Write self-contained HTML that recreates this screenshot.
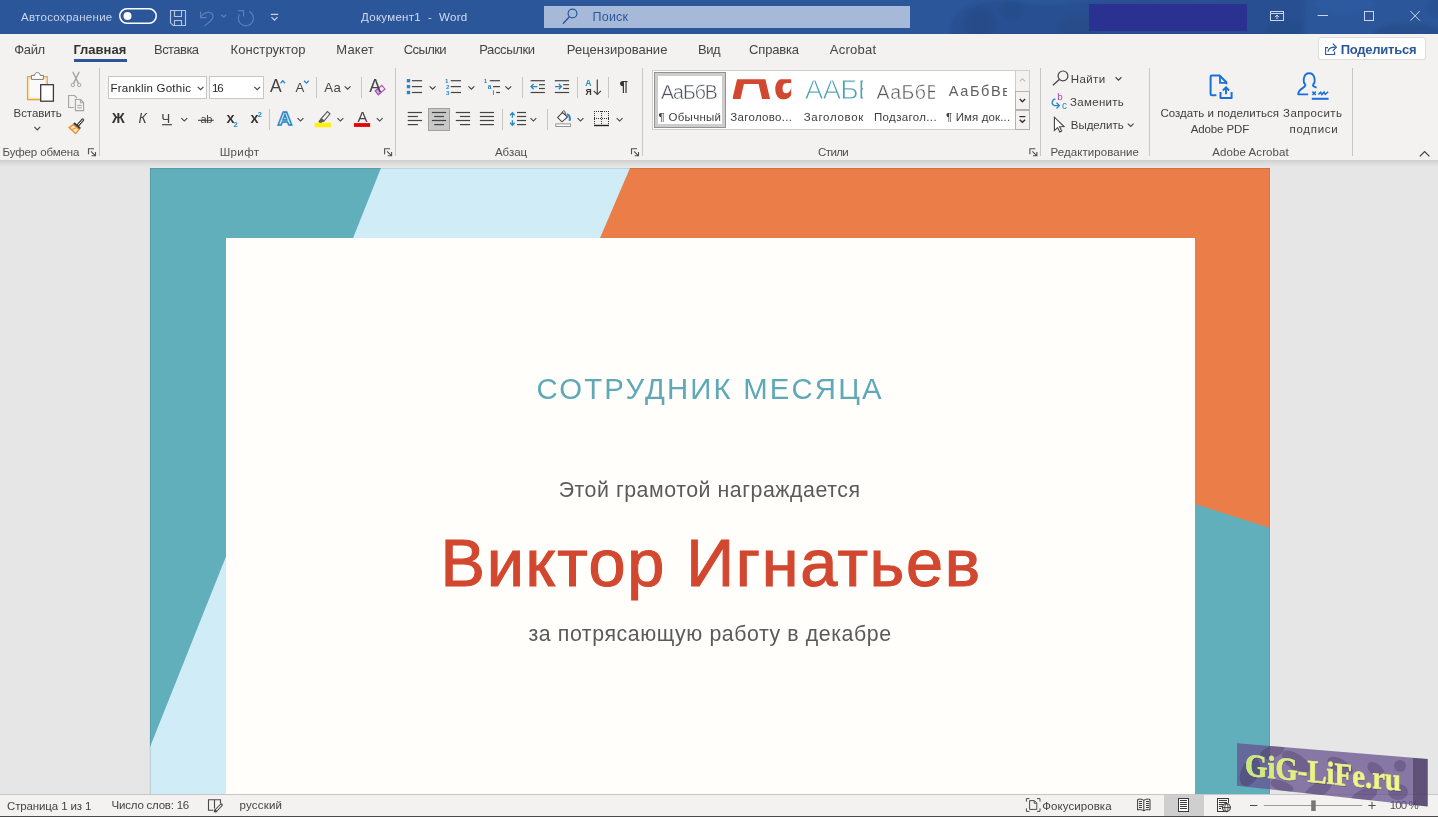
<!DOCTYPE html>
<html lang="ru">
<head>
<meta charset="utf-8">
<title>Документ1 - Word</title>
<style>
html,body{margin:0;padding:0;}
body{width:1438px;height:817px;overflow:hidden;background:#e6e6e6;font-family:"Liberation Sans",sans-serif;}
#app{position:relative;width:1438px;height:817px;overflow:hidden;background:#e6e6e6;}
#app div,#app span{box-sizing:border-box;}
.abs{position:absolute;}
.t{position:absolute;white-space:pre;line-height:1;font-family:"Liberation Sans",sans-serif;}
.t.clipR{overflow:hidden;}
.t.thin{-webkit-text-stroke:0.45px #fff;}
.t.thin2{-webkit-text-stroke:0.8px #fff;}
.t.name{-webkit-text-stroke:1.1px #d3472f;}
#titlebar{position:absolute;left:0;top:0;width:1438px;height:34px;background:#2b579a;overflow:hidden;}
#tabs{position:absolute;left:0;top:34px;width:1438px;height:30px;background:#f3f2f1;}
#ribbon{position:absolute;left:0;top:64px;width:1438px;height:96px;background:#f3f2f1;}
#rshadow{position:absolute;left:0;top:160px;width:1438px;height:7px;background:linear-gradient(#cfcfcf,#dcdcdc 45%,#e6e6e6);}
#status{position:absolute;left:0;top:794px;width:1438px;height:23px;background:#f3f2f1;border-top:1px solid #c6c6c6;border-bottom:1px solid #4a4a4a;}
.sep{position:absolute;width:1px;background:#c8c6c4;}
.box{position:absolute;background:#fff;border:1px solid #c8c6c4;}
#search{position:absolute;left:544px;top:6px;width:366px;height:22px;background:#a7b9d9;}
#userblk{position:absolute;left:1089px;top:4px;width:158px;height:27px;background:#2a3191;}
#share{position:absolute;left:1318px;top:37px;width:108px;height:23px;background:#fff;border:1px solid #e0deda;border-radius:3px;}
#tabul{position:absolute;left:74px;top:59px;width:53px;height:3px;background:#2b579a;}
#page{position:absolute;left:150px;top:168px;width:1120px;height:626px;background:#cfecf7;overflow:hidden;}
#inner{position:absolute;left:76px;top:70px;width:969px;height:560px;background:#fffefa;}
#texts{position:absolute;left:0;top:0;width:1438px;height:817px;will-change:opacity;}
#svgi{position:absolute;left:0;top:0;width:1438px;height:817px;pointer-events:none;}
</style>

</head>
<body>
<div id="app">
<!-- document area -->
<div id="page">
  <svg class="abs" style="left:0;top:0" width="1120" height="626" viewBox="150 168 1120 626">
    <polygon points="150,168 381,168 150,747" fill="#62afbc"/>
    <polygon points="1190,490 1270,490 1270,794 1190,794" fill="#62afbc"/>
    <polygon points="630,168 1270,168 1270,528 1195,504 1190,502.4 1190,238 600,238" fill="#eb7d49"/>
  </svg>
  <div id="inner"></div>
</div>
<div class="abs" style="left:150px;top:168px;width:1120px;height:626px;box-shadow:inset 1px 1px 0 rgba(0,0,0,0.10),inset -1px 0 0 rgba(0,0,0,0.08)"></div>
<div class="abs" style="left:149px;top:167px;width:1px;height:627px;background:#dedede"></div>
<div class="abs" style="left:1270px;top:167px;width:1px;height:627px;background:#ebebeb"></div>

<!-- title bar -->
<div id="titlebar">
  <svg class="abs" style="left:900px;top:0" width="538" height="34" viewBox="900 0 538 34">
    <defs><filter id="tb" x="-10%" y="-50%" width="120%" height="200%"><feGaussianBlur stdDeviation="2.2"/></filter></defs>
    <g filter="url(#tb)">
      <path d="M950 40 C948 20 960 4 985 2 C1010 -2 1030 6 1060 4 C1100 0 1140 -6 1200 -4 L1300 -6 C1312 6 1300 22 1308 40 Z" fill="#264c8a" opacity="0.62"/>
      <circle cx="980" cy="24" r="15" fill="#234781" opacity="0.45"/>
      <circle cx="1012" cy="9" r="10" fill="#234781" opacity="0.35"/>
      <ellipse cx="1080" cy="28" rx="22" ry="12" fill="#234781" opacity="0.4"/>
      <ellipse cx="1285" cy="30" rx="18" ry="10" fill="#234781" opacity="0.35"/>
      <ellipse cx="1345" cy="4" rx="30" ry="9" fill="#2d5ca3" opacity="0.6"/>
      <ellipse cx="1408" cy="34" rx="34" ry="11" fill="#254a86" opacity="0.6"/>
      <circle cx="1436" cy="6" r="10" fill="#254a86" opacity="0.4"/>
    </g>
  </svg>
  <div id="search"></div>
  <div id="userblk"></div>
</div>

<!-- tabs row -->
<div id="tabs"></div>
<div id="tabul"></div>
<div id="share"></div>

<!-- ribbon -->
<div id="ribbon"></div>
<div id="rshadow"></div>
<!-- group separators -->
<div class="sep" style="left:99px;top:68px;height:88px"></div>
<div class="sep" style="left:395px;top:68px;height:88px"></div>
<div class="sep" style="left:642px;top:68px;height:88px"></div>
<div class="sep" style="left:1040px;top:68px;height:88px"></div>
<div class="sep" style="left:1149px;top:68px;height:88px"></div>
<div class="sep" style="left:1352px;top:68px;height:88px"></div>
<!-- small separators -->
<div class="sep" style="left:316px;top:77px;height:21px"></div>
<div class="sep" style="left:361px;top:77px;height:21px"></div>
<div class="sep" style="left:269px;top:109px;height:21px"></div>
<div class="sep" style="left:522px;top:77px;height:21px"></div>
<div class="sep" style="left:577px;top:77px;height:21px"></div>
<div class="sep" style="left:608px;top:77px;height:21px"></div>
<div class="sep" style="left:502px;top:109px;height:21px"></div>
<div class="sep" style="left:547px;top:109px;height:21px"></div>
<!-- font name / size boxes -->
<div class="box" style="left:108px;top:76px;width:99px;height:23px"></div>
<div class="box" style="left:209px;top:76px;width:55px;height:23px"></div>
<!-- centered-align selected -->
<div class="abs" style="left:428px;top:108px;width:22px;height:23px;background:#c8c8c8;border:1px solid #a0a0a0"></div>
<!-- styles gallery -->
<div class="box" style="left:652px;top:70px;width:378px;height:60px;border-color:#d0cecc"></div>
<div class="abs" style="left:654px;top:72px;width:72px;height:56px;background:#cdcdcd;border:1px solid #929292"></div>
<div class="abs" style="left:658px;top:76px;width:64px;height:48px;background:#fff"></div>
<div class="abs" style="left:1015px;top:70px;width:15px;height:60px;background:#f3f2f1;border:1px solid #d0cecc"></div>
<div class="abs" style="left:1015px;top:91px;width:15px;height:19px;background:#f3f2f1;border:1px solid #b4b2b0"></div>
<div class="abs" style="left:1015px;top:110px;width:15px;height:20px;background:#f3f2f1;border:1px solid #b4b2b0"></div>

<!-- status bar -->
<div id="status"></div>
<div class="abs" style="left:1164px;top:795px;width:40px;height:21px;background:#cfcfcf"></div>

<svg id="svgi" width="1438" height="817" viewBox="0 0 1438 817" font-family="Liberation Sans, sans-serif">
<rect x="119.75" y="8.75" width="36.5" height="14.5" fill="none" stroke="#ffffff" stroke-width="1.5" rx="7.25"/>
<circle cx="127.5" cy="16" r="4" fill="#ffffff"/>
<path d="M170.5,10.5 H185.5 V25.5 H173.2 L170.5,22.8 Z" stroke="#b4c5e4" stroke-width="1.1" fill="none" />
<path d="M174.5,10.5 V16.5 H181.5 V10.5" stroke="#b4c5e4" stroke-width="1.1" fill="none" />
<path d="M174.5,25.5 V20.5 H181.5 V25.5" stroke="#b4c5e4" stroke-width="1.1" fill="none" />
<path d="M200.6,11.5 V17.6 H206.8" stroke="#5c7fb8" stroke-width="1.2" fill="none" />
<path d="M201,17.2 C204,11.5 213,10.5 213,16.5 C213,20 209.5,22 204.5,26" stroke="#5c7fb8" stroke-width="1.2" fill="none" />
<path d="M221.2,14.75 L223.7,17.25 L226.2,14.75" stroke="#5c7fb8" stroke-width="1.1" fill="none" />
<path d="M249.3,11.4 A7.6,7.6 0 1 1 239.4,14.2" stroke="#5c7fb8" stroke-width="1.2" fill="none" />
<path d="M238.2,10.7 H243.6 V16.4" stroke="#5c7fb8" stroke-width="1.2" fill="none" />
<line x1="270.8" y1="14.4" x2="278.2" y2="14.4" stroke="#c9d5ea" stroke-width="1.2" />
<path d="M271.5,17.1 L274.5,20.1 L277.5,17.1" stroke="#c9d5ea" stroke-width="1.2" fill="none" />
<circle cx="572.5" cy="13.5" r="4.4" fill="none" stroke="#2b579a" stroke-width="1.2"/>
<line x1="569.4" y1="16.8" x2="563" y2="23.8" stroke="#2b579a" stroke-width="1.3" />
<rect x="1270.5" y="11.5" width="13" height="9" fill="none" stroke="#c9d5ea" stroke-width="1" />
<line x1="1270.5" y1="13.5" x2="1283.5" y2="13.5" stroke="#c9d5ea" stroke-width="1" />
<path d="M1277,19.2 V15.4 M1274.8,17.2 L1277,15 L1279.2,17.2" stroke="#c9d5ea" stroke-width="1" fill="none" />
<line x1="1317.6" y1="15.5" x2="1328" y2="15.5" stroke="#c9d5ea" stroke-width="1" />
<rect x="1364.5" y="11.5" width="9" height="9" fill="none" stroke="#c9d5ea" stroke-width="1" />
<path d="M1410.4,11 L1419.8,20.6 M1419.8,11 L1410.4,20.6" stroke="#c9d5ea" stroke-width="1" fill="none" />
<path d="M1328,47.6 H1325.6 V54.5 H1334.6 V51.4" stroke="#2b579a" stroke-width="1.1" fill="none" />
<path d="M1328,51.8 C1328.2,48.4 1330.6,47.2 1335.6,47.2" stroke="#2b579a" stroke-width="1.2" fill="none" />
<path d="M1332.8,43.6 L1336.4,47.2 L1332.8,50.8" stroke="#2b579a" stroke-width="1.2" fill="none" />
<rect x="27.6" y="76.8" width="19.6" height="22.8" fill="#fafafa" stroke="#e8a23c" stroke-width="1.4" />
<rect x="28.9" y="78.1" width="17" height="20.2" fill="none" stroke="#fbe0aa" stroke-width="1.1" />
<path d="M31.4,79.4 V75.4 H34.6 C34.8,71.6 40,71.6 40.2,75.4 H43.4 V79.4 Z" stroke="#7a7a7a" stroke-width="1" fill="#ffffff" />
<rect x="40.7" y="84.7" width="12.7" height="16.5" fill="#ffffff" stroke="#3b3b3b" stroke-width="1.3" />
<path d="M34.4,126.95 L37.3,129.85 L40.199999999999996,126.95" stroke="#444444" stroke-width="1.15" fill="none" />
<path d="M72.8,71.8 L78.4,83.4 M79.2,71.8 L73.6,83.4" stroke="#a3a3a3" stroke-width="1.4" fill="none" />
<circle cx="72.8" cy="85" r="1.7" fill="none" stroke="#a3a3a3" stroke-width="1"/>
<circle cx="79.2" cy="85" r="1.7" fill="none" stroke="#a3a3a3" stroke-width="1"/>
<path d="M74,107.5 H68.6 V95.5 H74.5 L77,98" stroke="#a3a3a3" stroke-width="1.1" fill="none" />
<path d="M75.4,99.5 H80.5 L83.6,102.6 V110.6 H75.4 Z" stroke="#a3a3a3" stroke-width="1.1" fill="none" />
<path d="M80.4,99.6 V102.8 H83.6" stroke="#a3a3a3" stroke-width="1" fill="none" />
<line x1="77.2" y1="105.4" x2="81.8" y2="105.4" stroke="#a3a3a3" stroke-width="1" />
<line x1="77.2" y1="107.8" x2="81.8" y2="107.8" stroke="#a3a3a3" stroke-width="1" />
<path d="M82.8,119.8 L78,125.2" stroke="#3b3b3b" stroke-width="3" fill="none" stroke-linecap="round"/>
<path d="M82.8,119.8 L78.4,124.8" stroke="#f3f2f1" stroke-width="1" fill="none" stroke-linecap="round"/>
<path d="M74.6,122.8 L80.4,127.8 L79,129.4 L73.2,124.4 Z" stroke="#3b3b3b" stroke-width="1" fill="#3b3b3b" />
<path d="M73.2,124.6 L69,127.6 L75.6,133.6 L79,129.4 Z" stroke="#e8922f" stroke-width="1.3" fill="#fbe3c4" />
<line x1="71.6" y1="129.6" x2="77.2" y2="127.4" stroke="#e8922f" stroke-width="1" />
<path d="M88.5,154.3 V148.8 H94" stroke="#505050" stroke-width="1.1" fill="none" />
<path d="M91,151.3 L95.5,155.8 M95.5,151.9 V155.8 H91.6" stroke="#505050" stroke-width="1.1" fill="none" />
<path d="M384.6,154.3 V148.8 H390.1" stroke="#505050" stroke-width="1.1" fill="none" />
<path d="M387.1,151.3 L391.6,155.8 M391.6,151.9 V155.8 H387.70000000000005" stroke="#505050" stroke-width="1.1" fill="none" />
<path d="M631.5,154.3 V148.8 H637" stroke="#505050" stroke-width="1.1" fill="none" />
<path d="M634,151.3 L638.5,155.8 M638.5,151.9 V155.8 H634.6" stroke="#505050" stroke-width="1.1" fill="none" />
<path d="M1029.9,154.3 V148.8 H1035.4" stroke="#505050" stroke-width="1.1" fill="none" />
<path d="M1032.4,151.3 L1036.9,155.8 M1036.9,151.9 V155.8 H1033.0" stroke="#505050" stroke-width="1.1" fill="none" />
<path d="M197.7,86.85 L200.6,89.75 L203.5,86.85" stroke="#444444" stroke-width="1.15" fill="none" />
<path d="M254.29999999999998,86.85 L257.2,89.75 L260.09999999999997,86.85" stroke="#444444" stroke-width="1.15" fill="none" />
<path d="M181.4,118.14999999999999 L184.3,121.05 L187.20000000000002,118.14999999999999" stroke="#444444" stroke-width="1.15" fill="none" />
<path d="M344.70000000000005,86.35 L347.6,89.25 L350.5,86.35" stroke="#444444" stroke-width="1.15" fill="none" />
<path d="M297.6,118.14999999999999 L300.5,121.05 L303.4,118.14999999999999" stroke="#444444" stroke-width="1.15" fill="none" />
<path d="M337.5,118.14999999999999 L340.4,121.05 L343.29999999999995,118.14999999999999" stroke="#444444" stroke-width="1.15" fill="none" />
<path d="M376.8,118.14999999999999 L379.7,121.05 L382.59999999999997,118.14999999999999" stroke="#444444" stroke-width="1.15" fill="none" />
<path d="M429.70000000000005,86.35 L432.6,89.25 L435.5,86.35" stroke="#444444" stroke-width="1.15" fill="none" />
<path d="M468.5,86.35 L471.4,89.25 L474.29999999999995,86.35" stroke="#444444" stroke-width="1.15" fill="none" />
<path d="M505.40000000000003,86.35 L508.3,89.25 L511.2,86.35" stroke="#444444" stroke-width="1.15" fill="none" />
<path d="M530.5,118.14999999999999 L533.4,121.05 L536.3,118.14999999999999" stroke="#444444" stroke-width="1.15" fill="none" />
<path d="M577.6,118.14999999999999 L580.5,121.05 L583.4,118.14999999999999" stroke="#444444" stroke-width="1.15" fill="none" />
<path d="M616.7,118.14999999999999 L619.6,121.05 L622.5,118.14999999999999" stroke="#444444" stroke-width="1.15" fill="none" />
<path d="M1115.6,77.25 L1118.5,80.15 L1121.4,77.25" stroke="#444444" stroke-width="1.15" fill="none" />
<path d="M1127.8,123.55 L1130.7,126.45 L1133.6000000000001,123.55" stroke="#444444" stroke-width="1.15" fill="none" />
<line x1="162.1" y1="124.7" x2="172" y2="124.7" stroke="#444444" stroke-width="1.2" />
<line x1="198" y1="120.3" x2="213.7" y2="120.3" stroke="#444444" stroke-width="1.1" />
<path d="M280.6,83.2 L282.8,80.8 L285,83.2" stroke="#2986c7" stroke-width="1.3" fill="none" />
<path d="M304,80.8 L306.4,83.2 L308.8,80.8" stroke="#2986c7" stroke-width="1.3" fill="none" />
<g transform="translate(380.1,90) rotate(-40)"><rect x="-4.3" y="-2.4" width="8.6" height="4.8" fill="#f3f2f1" stroke="#b14fc2" stroke-width="1.1"/><rect x="-4.3" y="-2.4" width="3.4" height="4.8" fill="#d9a6e3" stroke="#b14fc2" stroke-width="1.1"/></g>
<text x="277.6" y="125" font-size="18.5" font-weight="bold" fill="#ffffff" stroke="#2986c7" stroke-width="1.4" textLength="14.6" lengthAdjust="spacingAndGlyphs">A</text>
<path d="M319.2,121.6 L321.4,118.4 L327.4,111.6 L330,113.8 L324.2,120.8 L320.6,122.4 Z" stroke="#5a5a5a" stroke-width="1.1" fill="#f3f2f1" />
<path d="M319,121.8 L321.4,118.4 L324.2,120.8 L320.4,122.6 Z" stroke="#5a5a5a" stroke-width="1" fill="#5a5a5a" />
<rect x="314.7" y="122.8" width="16.3" height="4.4" fill="#fff100" stroke="none" stroke-width="1" />
<rect x="354" y="123.1" width="16.1" height="3.8" fill="#e80000" stroke="none" stroke-width="1" />
<rect x="406.8" y="79.0" width="3.4" height="3.4" fill="#2986c7" stroke="none" stroke-width="1" />
<line x1="411.9" y1="80.7" x2="422.1" y2="80.7" stroke="#444444" stroke-width="1.2" />
<line x1="450.8" y1="80.7" x2="461" y2="80.7" stroke="#444444" stroke-width="1.2" />
<rect x="406.8" y="84.89999999999999" width="3.4" height="3.4" fill="#2986c7" stroke="none" stroke-width="1" />
<line x1="411.9" y1="86.6" x2="422.1" y2="86.6" stroke="#444444" stroke-width="1.2" />
<line x1="450.8" y1="86.6" x2="461" y2="86.6" stroke="#444444" stroke-width="1.2" />
<rect x="406.8" y="90.8" width="3.4" height="3.4" fill="#2986c7" stroke="none" stroke-width="1" />
<line x1="411.9" y1="92.5" x2="422.1" y2="92.5" stroke="#444444" stroke-width="1.2" />
<line x1="450.8" y1="92.5" x2="461" y2="92.5" stroke="#444444" stroke-width="1.2" />
<line x1="489.8" y1="80.7" x2="500" y2="80.7" stroke="#444444" stroke-width="1.2" />
<line x1="493" y1="86.6" x2="500" y2="86.6" stroke="#444444" stroke-width="1.2" />
<line x1="496.2" y1="92.5" x2="500" y2="92.5" stroke="#444444" stroke-width="1.2" />
<line x1="530.6" y1="80.7" x2="544.9" y2="80.7" stroke="#444444" stroke-width="1.2" />
<line x1="530.6" y1="92.5" x2="544.9" y2="92.5" stroke="#444444" stroke-width="1.2" />
<line x1="539.0" y1="84.7" x2="544.9" y2="84.7" stroke="#444444" stroke-width="1.2" />
<line x1="539.0" y1="88.5" x2="544.9" y2="88.5" stroke="#444444" stroke-width="1.2" />
<line x1="554.8" y1="80.7" x2="569.0999999999999" y2="80.7" stroke="#444444" stroke-width="1.2" />
<line x1="554.8" y1="92.5" x2="569.0999999999999" y2="92.5" stroke="#444444" stroke-width="1.2" />
<line x1="563.1999999999999" y1="84.7" x2="569.0999999999999" y2="84.7" stroke="#444444" stroke-width="1.2" />
<line x1="563.1999999999999" y1="88.5" x2="569.0999999999999" y2="88.5" stroke="#444444" stroke-width="1.2" />
<path d="M531,86.6 H537.4 M533.6,84 L531,86.6 L533.6,89.2" stroke="#2986c7" stroke-width="1.3" fill="none" />
<path d="M555,86.6 H561.4 M558.8,84 L561.4,86.6 L558.8,89.2" stroke="#2986c7" stroke-width="1.3" fill="none" />
<path d="M597.3,79.4 V94.4 M593.7,90.8 L597.3,94.4 L600.9,90.8" stroke="#444444" stroke-width="1.2" fill="none" />
<line x1="407.7" y1="112.5" x2="422.1" y2="112.5" stroke="#444444" stroke-width="1.2" />
<line x1="431.9" y1="112.5" x2="446.2" y2="112.5" stroke="#444444" stroke-width="1.2" />
<line x1="455.8" y1="112.5" x2="470.1" y2="112.5" stroke="#444444" stroke-width="1.2" />
<line x1="479.9" y1="112.5" x2="494" y2="112.5" stroke="#444444" stroke-width="1.2" />
<line x1="517" y1="112.5" x2="526.1" y2="112.5" stroke="#444444" stroke-width="1.2" />
<line x1="407.7" y1="116.5" x2="417.9" y2="116.5" stroke="#444444" stroke-width="1.2" />
<line x1="434.2" y1="116.5" x2="444" y2="116.5" stroke="#444444" stroke-width="1.2" />
<line x1="459.9" y1="116.5" x2="470.1" y2="116.5" stroke="#444444" stroke-width="1.2" />
<line x1="479.9" y1="116.5" x2="494" y2="116.5" stroke="#444444" stroke-width="1.2" />
<line x1="517" y1="116.5" x2="526.1" y2="116.5" stroke="#444444" stroke-width="1.2" />
<line x1="407.7" y1="120.5" x2="422.1" y2="120.5" stroke="#444444" stroke-width="1.2" />
<line x1="431.9" y1="120.5" x2="446.2" y2="120.5" stroke="#444444" stroke-width="1.2" />
<line x1="455.8" y1="120.5" x2="470.1" y2="120.5" stroke="#444444" stroke-width="1.2" />
<line x1="479.9" y1="120.5" x2="494" y2="120.5" stroke="#444444" stroke-width="1.2" />
<line x1="517" y1="120.5" x2="526.1" y2="120.5" stroke="#444444" stroke-width="1.2" />
<line x1="407.7" y1="124.6" x2="417.9" y2="124.6" stroke="#444444" stroke-width="1.2" />
<line x1="434.2" y1="124.6" x2="444" y2="124.6" stroke="#444444" stroke-width="1.2" />
<line x1="459.9" y1="124.6" x2="470.1" y2="124.6" stroke="#444444" stroke-width="1.2" />
<line x1="479.9" y1="124.6" x2="494" y2="124.6" stroke="#444444" stroke-width="1.2" />
<line x1="517" y1="124.6" x2="526.1" y2="124.6" stroke="#444444" stroke-width="1.2" />
<path d="M512.4,112.8 V117.8 M512.4,120.2 V125.2 M510.1,115.2 L512.4,112.7 L514.7,115.2 M510.1,122.8 L512.4,125.3 L514.7,122.8" stroke="#2986c7" stroke-width="1.3" fill="none" />
<path d="M557.6,117.6 L562.4,112.4 L567.5,117 L562,121.8 Z" stroke="#444444" stroke-width="1.1" fill="#ffffff" />
<path d="M562.2,113.4 C562,110.2 565.2,110 565.2,113 V115.4" stroke="#444444" stroke-width="1" fill="none" />
<path d="M566.8,114.2 C569.6,114.8 570.6,117.6 569.4,120.8" stroke="#2986c7" stroke-width="2" fill="none" />
<rect x="555.8" y="123.9" width="14.6" height="2.6" fill="#ffffff" stroke="#8a8a8a" stroke-width="0.9" />
<line x1="594" y1="111.5" x2="609" y2="111.5" stroke="#333" stroke-width="1" stroke-dasharray="1 1" shape-rendering="crispEdges"/>
<line x1="594" y1="118.5" x2="609" y2="118.5" stroke="#333" stroke-width="1" stroke-dasharray="1 1" shape-rendering="crispEdges"/>
<line x1="594.5" y1="111" x2="594.5" y2="125" stroke="#333" stroke-width="1" stroke-dasharray="1 1" shape-rendering="crispEdges"/>
<line x1="601.5" y1="111" x2="601.5" y2="125" stroke="#333" stroke-width="1" stroke-dasharray="1 1" shape-rendering="crispEdges"/>
<line x1="608.5" y1="111" x2="608.5" y2="125" stroke="#333" stroke-width="1" stroke-dasharray="1 1" shape-rendering="crispEdges"/>
<line x1="594" y1="125.5" x2="609" y2="125.5" stroke="#222" stroke-width="1.4" />
<path d="M1019.7,81.4 L1022.4,78.7 L1025.1,81.4" stroke="#b8b8b8" stroke-width="1.1" fill="none" />
<path d="M1019.6999999999999,99.05000000000001 L1022.4,101.75 L1025.1,99.05000000000001" stroke="#333" stroke-width="1.4" fill="none" />
<line x1="1019.4" y1="116.6" x2="1025.4" y2="116.6" stroke="#333" stroke-width="1.2" />
<path d="M1019.6999999999999,119.65 L1022.4,122.35 L1025.1,119.65" stroke="#333" stroke-width="1.4" fill="none" />
<svg x="732.8" y="79.2" width="58.4" height="20.5" viewBox="732.8 79.2 58.4 20.5" overflow="hidden"><text transform="translate(731.0,98.7) scale(0.66,1)" font-size="85" font-weight="bold" fill="#d2472f">А</text><text transform="translate(773.7,98.9) scale(0.8,1)" font-size="64" font-weight="bold" fill="#d2472f">а</text></svg>
<circle cx="1063" cy="75.9" r="4.9" fill="none" stroke="#444444" stroke-width="1.2"/>
<line x1="1059.3" y1="79.5" x2="1052.9" y2="85.3" stroke="#444444" stroke-width="1.3" />
<path d="M1055.4,98.8 C1051.6,99.6 1051,104.6 1054.6,105.6 H1059" stroke="#2986c7" stroke-width="1.3" fill="none" />
<path d="M1056.5,102.7 L1059.4,105.6 L1056.5,108.5" stroke="#2986c7" stroke-width="1.3" fill="none" />
<path d="M1054.4,117.2 V130.6 L1057.6,127.6 L1059.8,132 L1061.7,131.1 L1059.6,126.7 L1064,126.5 Z" stroke="#444444" stroke-width="1.1" fill="#ffffff" />
<path d="M1216.4,95.3 H1212 Q1210.6,95.3 1210.6,93.9 V76.9 Q1210.6,75.5 1212,75.5 H1219.6 L1226.3,82.2 V84.2" stroke="#1b6fdb" stroke-width="2" fill="none" />
<path d="M1220,76 V82.9 H1226" stroke="#1b6fdb" stroke-width="1.8" fill="none" />
<path d="M1220.5,92 V98.1 H1231.6 V92" stroke="#1b6fdb" stroke-width="2" fill="none" stroke-linejoin="round"/>
<path d="M1226,94.2 V87.6 M1222.9,90.5 L1226,87.4 L1229.1,90.5" stroke="#1b6fdb" stroke-width="1.9" fill="none" />
<path d="M1305.6,84.6 C1302.6,82.6 1303,73.2 1309.2,73.2 C1315.4,73.2 1315.8,82.6 1312.8,84.6" stroke="#1b6fdb" stroke-width="1.9" fill="none" />
<path d="M1305.6,84.6 C1305.6,88.4 1298.4,88 1298.2,94.4 H1308.2" stroke="#1b6fdb" stroke-width="1.9" fill="none" stroke-linejoin="round"/>
<path d="M1312.8,84.6 C1312.8,86.6 1314.6,87.2 1316.6,87.6" stroke="#1b6fdb" stroke-width="1.9" fill="none" />
<path d="M1312.4,91.6 L1315.8,95 M1315.8,91.6 L1312.4,95" stroke="#1b6fdb" stroke-width="1.5" fill="none" />
<path d="M1318.4,94.6 L1320.6,92.2 L1321.8,94.6 L1324,92 L1325.2,94.4 L1328.2,91.8" stroke="#1b6fdb" stroke-width="1.5" fill="none" />
<line x1="1311.8" y1="98.8" x2="1328.6" y2="98.8" stroke="#1b6fdb" stroke-width="2" />
<path d="M1419.8,156.4 L1424.6,151.6 L1429.4,156.4" stroke="#444444" stroke-width="1.3" fill="none" />
<path d="M213.4,810.3 H208.5 V799.8 H220.5 V803.4 M214.5,799.8 V808.4" stroke="#4a4a4a" stroke-width="1.1" fill="none" />
<path d="M221.2,805 L215.6,810.8" stroke="#4a4a4a" stroke-width="3.2" fill="none" stroke-linecap="round"/>
<path d="M221,805.2 L216.4,810" stroke="#f3f2f1" stroke-width="1.1" fill="none" stroke-linecap="round"/>
<path d="M214.2,811.8 L214.9,809.6 L216.6,811.2 Z" stroke="#4a4a4a" stroke-width="0.8" fill="#4a4a4a" />
<path d="M1026.4,801.6 V798.6 H1029.4 M1037,798.6 H1040 V801.6 M1040,808.4 V811.4 H1037 M1029.4,811.4 H1026.4 V808.4" stroke="#4a4a4a" stroke-width="1" fill="none" />
<path d="M1029.6,800.6 H1034.4 L1036.8,803 V809.4 H1029.6 Z M1034.2,800.8 V803.2 H1036.6" stroke="#4a4a4a" stroke-width="1" fill="none" />
<path d="M1143.8,800.3 C1141.6,798.9 1139.6,798.9 1137.6,799.5 V810 C1139.6,809.4 1141.6,809.4 1143.8,810.8 C1146,809.4 1148,809.4 1150,810 V799.5 C1148,798.9 1146,798.9 1143.8,800.3 V810.8" stroke="#3a3a3a" stroke-width="1" fill="none" />
<line x1="1139" y1="801.5" x2="1142" y2="801.5" stroke="#3a3a3a" stroke-width="1" shape-rendering="crispEdges"/>
<line x1="1146" y1="801.5" x2="1149" y2="801.5" stroke="#3a3a3a" stroke-width="1" shape-rendering="crispEdges"/>
<line x1="1139" y1="803.5" x2="1142" y2="803.5" stroke="#3a3a3a" stroke-width="1" shape-rendering="crispEdges"/>
<line x1="1146" y1="803.5" x2="1149" y2="803.5" stroke="#3a3a3a" stroke-width="1" shape-rendering="crispEdges"/>
<line x1="1139" y1="805.5" x2="1142" y2="805.5" stroke="#3a3a3a" stroke-width="1" shape-rendering="crispEdges"/>
<line x1="1146" y1="805.5" x2="1149" y2="805.5" stroke="#3a3a3a" stroke-width="1" shape-rendering="crispEdges"/>
<line x1="1139" y1="807.5" x2="1142" y2="807.5" stroke="#3a3a3a" stroke-width="1" shape-rendering="crispEdges"/>
<line x1="1146" y1="807.5" x2="1149" y2="807.5" stroke="#3a3a3a" stroke-width="1" shape-rendering="crispEdges"/>
<rect x="1178.5" y="798.5" width="10" height="13" fill="#ffffff" stroke="#3a3a3a" stroke-width="1" shape-rendering="crispEdges"/>
<line x1="1180" y1="800.5" x2="1187" y2="800.5" stroke="#3a3a3a" stroke-width="1" shape-rendering="crispEdges"/>
<line x1="1180" y1="802.5" x2="1187" y2="802.5" stroke="#3a3a3a" stroke-width="1" shape-rendering="crispEdges"/>
<line x1="1180" y1="804.5" x2="1187" y2="804.5" stroke="#3a3a3a" stroke-width="1" shape-rendering="crispEdges"/>
<line x1="1180" y1="806.5" x2="1187" y2="806.5" stroke="#3a3a3a" stroke-width="1" shape-rendering="crispEdges"/>
<line x1="1180" y1="808.5" x2="1187" y2="808.5" stroke="#3a3a3a" stroke-width="1" shape-rendering="crispEdges"/>
<path d="M1224.5,811.5 H1217.5 V798.5 H1228.5 V802.5" stroke="#3a3a3a" stroke-width="1" fill="none" shape-rendering="crispEdges"/>
<line x1="1219" y1="800.5" x2="1227" y2="800.5" stroke="#3a3a3a" stroke-width="1" shape-rendering="crispEdges"/>
<line x1="1219" y1="802.5" x2="1227" y2="802.5" stroke="#3a3a3a" stroke-width="1" shape-rendering="crispEdges"/>
<line x1="1219" y1="804.5" x2="1227" y2="804.5" stroke="#3a3a3a" stroke-width="1" shape-rendering="crispEdges"/>
<line x1="1219" y1="806.5" x2="1222" y2="806.5" stroke="#3a3a3a" stroke-width="1" shape-rendering="crispEdges"/>
<line x1="1219" y1="808.5" x2="1221" y2="808.5" stroke="#3a3a3a" stroke-width="1" shape-rendering="crispEdges"/>
<circle cx="1226.4" cy="807.6" r="4" fill="#f3f2f1" stroke="#3a3a3a" stroke-width="1.1"/>
<path d="M1222.4,807.6 H1230.4 M1226.4,803.6 C1224.2,805.6 1224.2,809.6 1226.4,811.6 C1228.6,809.6 1228.6,805.6 1226.4,803.6" stroke="#3a3a3a" stroke-width="0.9" fill="none" />
<line x1="1250" y1="805.5" x2="1257.4" y2="805.5" stroke="#4a4a4a" stroke-width="1" />
<line x1="1263.8" y1="805.5" x2="1362.4" y2="805.5" stroke="#9a9a9a" stroke-width="1" />
<rect x="1311.2" y="800.4" width="4.5" height="10.6" fill="#777777" stroke="none" stroke-width="1" />
<path d="M1368.4,805.5 H1375.6 M1372,801.9 V809.1" stroke="#4a4a4a" stroke-width="1" fill="none" />
</svg>
<div id="texts">
<span class="t" style="left:21.00px;top:12px;font-size:11.5px;color:#c9d5ea;letter-spacing:0.277px;">Автосохранение</span>
<span class="t" style="left:361.00px;top:12px;font-size:11.5px;color:#d3dcee;letter-spacing:0.286px;">Документ1  -  Word</span>
<span class="t" style="left:592.50px;top:11px;font-size:12.5px;color:#2b579a;letter-spacing:0.225px;">Поиск</span>
<span class="t" style="left:14.30px;top:43px;font-size:13px;color:#444444;letter-spacing:-0.360px;">Файл</span>
<span class="t" style="left:154.00px;top:43px;font-size:13px;color:#444444;letter-spacing:-0.540px;">Вставка</span>
<span class="t" style="left:230.60px;top:43px;font-size:13px;color:#444444;letter-spacing:0.072px;">Конструктор</span>
<span class="t" style="left:336.30px;top:43px;font-size:13px;color:#444444;letter-spacing:0.180px;">Макет</span>
<span class="t" style="left:403.70px;top:43px;font-size:13px;color:#444444;letter-spacing:-0.576px;">Ссылки</span>
<span class="t" style="left:479.20px;top:43px;font-size:13px;color:#444444;letter-spacing:-0.360px;">Рассылки</span>
<span class="t" style="left:566.80px;top:43px;font-size:13px;color:#444444;letter-spacing:0.014px;">Рецензирование</span>
<span class="t" style="left:698.10px;top:43px;font-size:13px;color:#444444;letter-spacing:-0.540px;">Вид</span>
<span class="t" style="left:749.00px;top:43px;font-size:13px;color:#444444;letter-spacing:-0.150px;">Справка</span>
<span class="t" style="left:829.80px;top:43px;font-size:13px;color:#444444;letter-spacing:0.270px;">Acrobat</span>
<span class="t" style="left:73.40px;top:43px;font-size:13px;color:#333333;font-weight:bold;letter-spacing:0.000px;">Главная</span>
<span class="t" style="left:1340.70px;top:43px;font-size:13px;color:#2b579a;font-weight:bold;letter-spacing:-0.240px;">Поделиться</span>
<span class="t" style="left:13.60px;top:108px;font-size:11.5px;color:#404040;letter-spacing:-0.077px;">Вставить</span>
<span class="t" style="left:2.60px;top:147px;font-size:11.5px;color:#505050;letter-spacing:-0.131px;">Буфер обмена</span>
<span class="t" style="left:219.70px;top:147px;font-size:11.5px;color:#505050;letter-spacing:0.360px;">Шрифт</span>
<span class="t" style="left:494.90px;top:147px;font-size:11.5px;color:#505050;letter-spacing:0.000px;">Абзац</span>
<span class="t" style="left:818.00px;top:147px;font-size:11.5px;color:#505050;letter-spacing:-0.585px;">Стили</span>
<span class="t" style="left:1050.60px;top:147px;font-size:11.5px;color:#505050;letter-spacing:0.055px;">Редактирование</span>
<span class="t" style="left:1212.20px;top:147px;font-size:11.5px;color:#505050;letter-spacing:0.090px;">Adobe Acrobat</span>
<span class="t" style="left:110.50px;top:83px;font-size:11.5px;color:#262626;letter-spacing:0.219px;">Franklin Gothic</span>
<span class="t" style="left:212.00px;top:83px;font-size:11.5px;color:#262626;letter-spacing:-1.080px;">16</span>
<span class="t" style="left:1070.70px;top:74px;font-size:11.5px;color:#404040;letter-spacing:0.405px;">Найти</span>
<span class="t" style="left:1070.00px;top:97px;font-size:11.5px;color:#404040;letter-spacing:0.309px;">Заменить</span>
<span class="t" style="left:1070.80px;top:120px;font-size:11.5px;color:#404040;letter-spacing:-0.026px;">Выделить</span>
<span class="t" style="left:1160.40px;top:108px;font-size:11.5px;color:#404040;letter-spacing:0.038px;">Создать и поделиться</span>
<span class="t" style="left:1190.80px;top:124px;font-size:11.5px;color:#404040;letter-spacing:-0.135px;">Adobe PDF</span>
<span class="t" style="left:1283.10px;top:108px;font-size:11.5px;color:#404040;letter-spacing:0.383px;">Запросить</span>
<span class="t" style="left:1289.50px;top:124px;font-size:11.5px;color:#404040;letter-spacing:0.720px;">подписи</span>
<span class="t" style="left:658.50px;top:112px;font-size:11.5px;color:#404040;letter-spacing:0.292px;">¶ Обычный</span>
<span class="t" style="left:730.20px;top:112px;font-size:11.5px;color:#404040;letter-spacing:0.324px;">Заголово...</span>
<span class="t" style="left:803.70px;top:112px;font-size:11.5px;color:#404040;letter-spacing:0.697px;">Заголовок</span>
<span class="t" style="left:874.00px;top:112px;font-size:11.5px;color:#404040;letter-spacing:0.342px;">Подзагол...</span>
<span class="t" style="left:946.00px;top:112px;font-size:11.5px;color:#404040;letter-spacing:0.131px;">¶ Имя док...</span>
<span class="t thin" style="left:660.90px;top:83px;font-size:19.5px;color:#505560;letter-spacing:-1.035px;">АаБбВ</span>
<span class="t clipR thin2" style="left:804.80px;top:76px;font-size:28px;color:#4f9fb2;letter-spacing:-0.9px;width:57.80px;">ААББВВ</span>
<span class="t clipR thin" style="left:876.60px;top:83px;font-size:19.5px;color:#585858;letter-spacing:0.45px;width:58.60px;">АаБбВв</span>
<span class="t clipR" style="left:948.80px;top:84px;font-size:14.5px;color:#606060;letter-spacing:1.6px;width:58.10px;">АаБбВв</span>
<span class="t" style="left:112.00px;top:111px;font-size:14px;color:#333;font-weight:bold;letter-spacing:0.000px;">Ж</span>
<span class="t" style="left:138.50px;top:111px;font-size:14px;color:#444;font-style:italic;letter-spacing:0.000px;">К</span>
<span class="t" style="left:161.30px;top:112px;font-size:13.5px;color:#444;letter-spacing:0.000px;">Ч</span>
<span class="t" style="left:200.40px;top:114px;font-size:11px;color:#444;letter-spacing:-0.360px;">ab</span>
<span class="t" style="left:226.40px;top:111px;font-size:14.5px;color:#333;font-weight:bold;letter-spacing:0.000px;">x</span>
<span class="t" style="left:233.50px;top:121px;font-size:7.5px;color:#2986c7;font-weight:bold;letter-spacing:0.000px;">2</span>
<span class="t" style="left:250.60px;top:111px;font-size:14.5px;color:#333;font-weight:bold;letter-spacing:0.000px;">x</span>
<span class="t" style="left:257.70px;top:111px;font-size:7.5px;color:#2986c7;font-weight:bold;letter-spacing:0.000px;">2</span>
<span class="t" style="left:269.90px;top:78px;font-size:17.5px;color:#444;letter-spacing:0.000px;">A</span>
<span class="t" style="left:295.40px;top:81px;font-size:13.2px;color:#444;letter-spacing:0.000px;">A</span>
<span class="t" style="left:324.30px;top:81px;font-size:13.2px;color:#444;letter-spacing:0.360px;">Aa</span>
<span class="t" style="left:369.20px;top:78px;font-size:17.5px;color:#444;letter-spacing:0.000px;">A</span>
<span class="t" style="left:357.40px;top:109px;font-size:15px;color:#444;letter-spacing:0.000px;">A</span>
<span class="t" style="left:619.40px;top:78px;font-size:15.5px;color:#333;font-weight:bold;letter-spacing:0.000px;">¶</span>
<span class="t" style="left:585.20px;top:79px;font-size:8.6px;color:#2986c7;font-weight:bold;letter-spacing:0.000px;">A</span>
<span class="t" style="left:585.60px;top:88px;font-size:8.6px;color:#333;font-weight:bold;letter-spacing:0.000px;">Я</span>
<span class="t" style="left:444.90px;top:78px;font-size:6.2px;color:#2986c7;font-weight:bold;letter-spacing:0.000px;">1</span>
<span class="t" style="left:445.90px;top:84px;font-size:6.2px;color:#2986c7;font-weight:bold;letter-spacing:0.000px;">2</span>
<span class="t" style="left:445.90px;top:90px;font-size:6.2px;color:#2986c7;font-weight:bold;letter-spacing:0.000px;">3</span>
<span class="t" style="left:483.80px;top:78px;font-size:6.2px;color:#2986c7;font-weight:bold;letter-spacing:0.000px;">1</span>
<span class="t" style="left:487.80px;top:84px;font-size:6.6px;color:#2986c7;font-weight:bold;letter-spacing:0.000px;">a</span>
<span class="t" style="left:492.60px;top:90px;font-size:6.4px;color:#2986c7;font-weight:bold;letter-spacing:0.000px;">i</span>
<span class="t" style="left:1057.20px;top:92px;font-size:9.8px;color:#a33fb5;letter-spacing:0.000px;">b</span>
<span class="t" style="left:1061.90px;top:101px;font-size:10px;color:#2986c7;letter-spacing:0.000px;">c</span>
<span class="t" style="left:7.00px;top:801px;font-size:11.5px;color:#444444;letter-spacing:-0.129px;">Страница 1 из 1</span>
<span class="t" style="left:111.60px;top:800px;font-size:11.5px;color:#444444;letter-spacing:-0.222px;">Число слов: 16</span>
<span class="t" style="left:239.60px;top:800px;font-size:11.5px;color:#444444;letter-spacing:0.180px;">русский</span>
<span class="t" style="left:1042.20px;top:801px;font-size:11.5px;color:#444444;letter-spacing:0.072px;">Фокусировка</span>
<span class="t" style="left:1389.80px;top:800px;font-size:11.5px;color:#555555;letter-spacing:-0.900px;">100 %</span>
<span class="t doc" style="left:536.60px;top:374px;font-size:29.33px;color:#5fa8b8;letter-spacing:2.172px;">СОТРУДНИК МЕСЯЦА</span>
<span class="t doc" style="left:558.70px;top:480px;font-size:21.33px;color:#5a5a5a;letter-spacing:0.533px;">Этой грамотой награждается</span>
<span class="t doc name" style="left:440.60px;top:530px;font-size:66.67px;color:#d2472f;letter-spacing:1.646px;">Виктор Игнатьев</span>
<span class="t doc" style="left:528.50px;top:624px;font-size:21.33px;color:#5a5a5a;letter-spacing:0.570px;">за потрясающую работу в декабре</span>
</div>
<!-- watermark -->
<svg class="abs" style="left:1230px;top:738px" width="208" height="79" viewBox="1230 738 208 79" font-family="Liberation Serif, serif">
  <defs>
    <linearGradient id="wmg" x1="0" y1="0" x2="1" y2="0">
      <stop offset="0" stop-color="#c4e67a"/><stop offset="0.45" stop-color="#eef486"/><stop offset="1" stop-color="#f6f68a"/>
    </linearGradient>
    <clipPath id="wmc"><polygon points="1237,743.3 1427.7,759.1 1427.7,806.6 1237,785.8"/></clipPath>
  </defs>
  <polygon points="1237,743.3 1427.7,759.1 1427.7,806.6 1237,785.8" fill="#65508e" fill-opacity="0.74"/>
  <g clip-path="url(#wmc)" fill="#2e2350" fill-opacity="0.28">
    <ellipse cx="1250" cy="772" rx="9" ry="15" transform="rotate(25 1250 772)"/>
    <ellipse cx="1272" cy="752" rx="13" ry="6" transform="rotate(-20 1272 752)"/>
    <ellipse cx="1296" cy="762" rx="16" ry="8" transform="rotate(35 1296 762)"/>
    <ellipse cx="1318" cy="790" rx="15" ry="7" transform="rotate(-30 1318 790)"/>
    <ellipse cx="1340" cy="766" rx="14" ry="7" transform="rotate(30 1340 766)"/>
    <ellipse cx="1364" cy="796" rx="14" ry="7" transform="rotate(-25 1364 796)"/>
    <ellipse cx="1376" cy="770" rx="10" ry="6" transform="rotate(40 1376 770)"/>
    <circle cx="1400" cy="766" r="6"/>
    <ellipse cx="1398" cy="792" rx="10" ry="8"/>
    <ellipse cx="1282" cy="786" rx="12" ry="5" transform="rotate(20 1282 786)"/>
  </g>
  <polygon points="1413,757.9 1427.7,759.1 1427.7,806.6 1413,805" fill="#2e2440" fill-opacity="0.45"/>
  <g transform="translate(1245,775.6) skewY(5.6)">
    <text x="0.6" y="1.2" font-size="32" font-weight="bold" fill="#4a3a6a" fill-opacity="0.55" textLength="156" lengthAdjust="spacingAndGlyphs">GiG-LiFe.ru</text>
    <text x="0" y="0" font-size="32" font-weight="bold" fill="url(#wmg)" stroke="#e2ee84" stroke-width="0.7" textLength="156" lengthAdjust="spacingAndGlyphs">GiG-LiFe.ru</text>
  </g>
</svg>

</div>
</body>
</html>
